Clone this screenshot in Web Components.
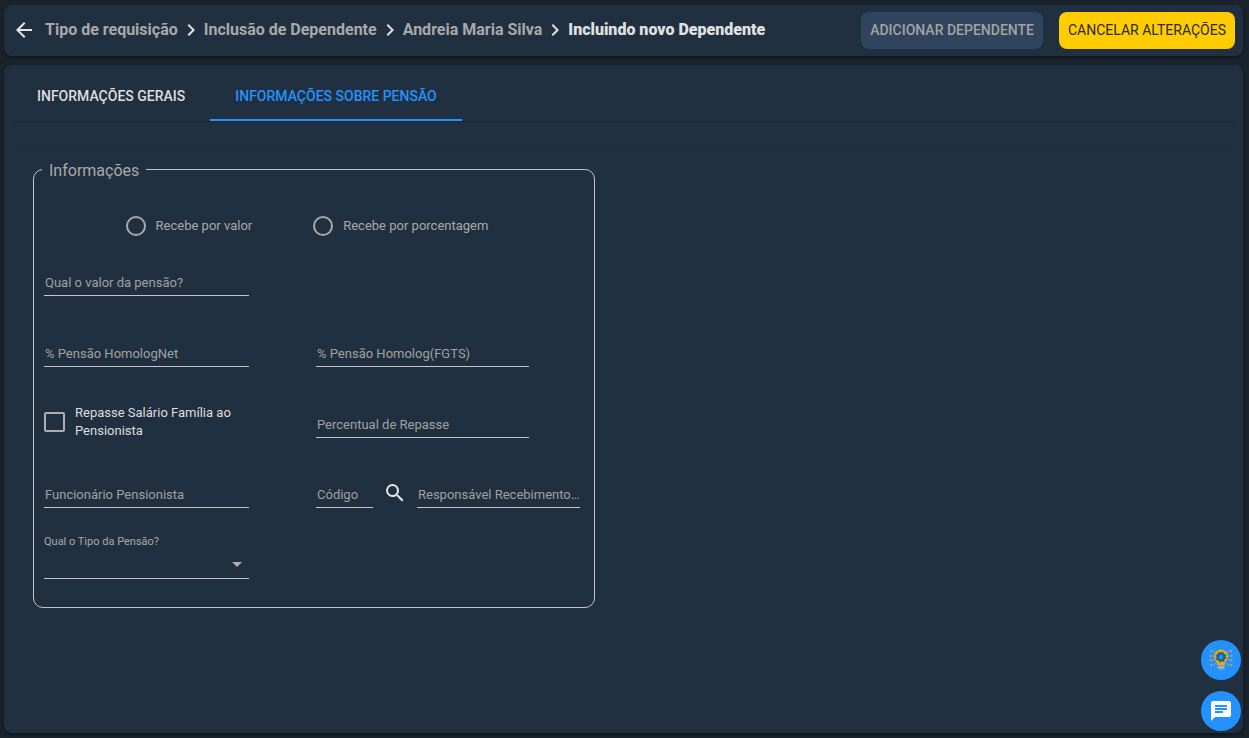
<!DOCTYPE html>
<html lang="pt-BR">
<head>
<meta charset="utf-8">
<meta name="viewport" content="width=device-width, initial-scale=1">
<title>Incluindo novo Dependente</title>
<style>
  html { background: #1a222b; }
  body { margin: 0; font: 400 14px/20px Roboto, "Liberation Sans", sans-serif; color: #e0e0e0; }
</style>
</head>
<body>
<dep-app></dep-app>
<script>
const define = (name, html, setup) => customElements.define(name, class extends HTMLElement {
  constructor() {
    super();
    const tpl = document.createElement('template');
    tpl.innerHTML = html;
    this.attachShadow({ mode: 'open' }).append(tpl.content.cloneNode(true));
  }
  connectedCallback() { if (setup) setup(this, this.shadowRoot); }
});

define('dep-crumbs', `
  <style>
    :host { display: block; }
    nav { display: flex; align-items: center; gap: 1px; padding-bottom: 2px; font: 700 16px/24px Roboto, sans-serif; white-space: nowrap; }
    a { color: #a9a9a9; text-decoration: none; }
    .back { display: flex; color: #e6e6e6; margin-right: 8px; }
    b { color: #e0e0e0; }
    svg { display: block; width: 24px; height: 24px; fill: currentColor; }
  </style>
  <nav aria-label="Navegação">
    <a class="back" href="#voltar" aria-label="Voltar"><svg viewBox="0 0 24 24"><path d="M20 11H7.83l5.59-5.59L12 4l-8 8 8 8 1.41-1.41L7.83 13H20z"/></svg></a>
    <a href="#tipo">Tipo de requisição</a>
    <svg viewBox="0 0 24 24"><path d="M10 6 8.59 7.41 13.17 12l-4.58 4.59L10 18l6-6z"/></svg>
    <a href="#inclusao">Inclusão de Dependente</a>
    <svg viewBox="0 0 24 24"><path d="M10 6 8.59 7.41 13.17 12l-4.58 4.59L10 18l6-6z"/></svg>
    <a href="#pessoa">Andreia Maria Silva</a>
    <svg viewBox="0 0 24 24"><path d="M10 6 8.59 7.41 13.17 12l-4.58 4.59L10 18l6-6z"/></svg>
    <b aria-current="page">Incluindo novo Dependente</b>
  </nav>`);

define('dep-button', `
  <style>
    :host { display: block; }
    button { display: block; height: 37px; padding: 0 9px 2px; border: 0; border-radius: 8px; background: #ffcc00; color: #2b2b2b;
      font: 400 14px/20px Roboto, sans-serif; text-transform: uppercase; white-space: nowrap; cursor: pointer; }
    button:disabled { background: #30455d; color: #a3a3a3; font-weight: 500; cursor: default; }
  </style>
  <button type="button"><slot></slot></button>`,
  (el, root) => { root.querySelector('button').disabled = el.hasAttribute('disabled'); });

define('dep-header', `
  <style>
    :host { display: flex; align-items: center; justify-content: space-between; gap: 16px; min-height: 51px; box-sizing: border-box;
      padding: 0 8px; border-radius: 8px; background: #213040; box-shadow: 0 2px 3px rgba(0,0,0,.35); }
    .actions { display: flex; gap: 16px; }
  </style>
  <dep-crumbs></dep-crumbs>
  <div class="actions">
    <dep-button disabled>Adicionar Dependente</dep-button>
    <dep-button>Cancelar Alterações</dep-button>
  </div>`);

define('dep-tabs', `
  <style>
    :host { display: block; border-bottom: 1px solid #1d2935; }
    div { display: flex; }
    button { height: 48px; padding: 0 25px; border: 0; border-bottom: 2px solid transparent; background: none; color: #dedede;
      font: 500 14px/20px Roboto, sans-serif; text-transform: uppercase; white-space: nowrap; cursor: pointer; }
    button[aria-selected=true] { color: #2492fc; border-color: #2492fc; }
  </style>
  <div role="tablist">
    <button role="tab" aria-selected="false">Informações Gerais</button>
    <button role="tab" aria-selected="true">Informações sobre Pensão</button>
  </div>`);

define('dep-radio', `
  <style>
    :host { display: block; }
    label { display: flex; align-items: center; gap: 10px; font: 400 13px/18px Roboto, sans-serif; color: #a9a9a9; white-space: nowrap; }
    input { appearance: none; box-sizing: border-box; width: 20px; height: 20px; margin: 0; border: 2px solid #a9a9a9; border-radius: 50%; }
    input:checked { background: radial-gradient(#2492fc 5px, transparent 6px); border-color: #2492fc; }
  </style>
  <label><input type="radio"><span><slot></slot></span></label>`);

define('dep-check', `
  <style>
    :host { display: block; }
    label { display: flex; align-items: center; gap: 10px; font: 400 13px/18px Roboto, sans-serif; color: #dedede; }
    input { appearance: none; flex: none; box-sizing: border-box; width: 21px; height: 20px; margin: 0; border: 2px solid #b0aeac; border-radius: 2px; }
    input:checked { background: #2492fc; border-color: #2492fc; }
  </style>
  <label><input type="checkbox"><span><slot></slot></span></label>`);

define('dep-field', `
  <style>
    :host { display: grid; align-items: end; box-sizing: border-box; height: 31px; min-width: 0; border-bottom: 1px solid #c8c6c2; }
    label, input { grid-area: 1 / 1; min-width: 0; font: 400 13px/18px Roboto, sans-serif; }
    label { padding: 0 0 3px 1px; color: #a0a0a0; pointer-events: none; overflow: hidden; text-overflow: ellipsis; white-space: nowrap; }
    input { width: 100%; box-sizing: border-box; height: 21px; padding: 0 0 3px; border: 0; background: none; color: #dedede; outline: 0; }
    input:focus + label, input:not(:placeholder-shown) + label { visibility: hidden; }
  </style>
  <input id="f" type="text" placeholder=" "><label for="f"><slot></slot></label>`);

define('dep-select', `
  <style>
    :host { display: block; border-bottom: 1px solid #c8c6c2; }
    label { display: block; padding-top: 1px; font: 400 11px/16px Roboto, sans-serif; color: #a9a9a9; }
    div { display: grid; align-items: center; }
    select, svg { grid-area: 1 / 1; }
    select { appearance: none; width: 100%; height: 28px; border: 0; background: none; color: #dedede; font: 400 13px/18px Roboto, sans-serif; outline: 0; }
    svg { justify-self: end; width: 10px; height: 5px; margin-right: 7px; fill: #b0b0b0; pointer-events: none; }
  </style>
  <label for="s"><slot></slot></label>
  <div><select id="s"><option></option></select><svg viewBox="0 0 10 5"><path d="M0 0h10L5 5z"/></svg></div>`);

define('dep-search', `
  <style>
    :host { display: block; }
    button { display: flex; padding: 0; border: 0; background: none; color: #e6e6e6; cursor: pointer; }
    svg { width: 24px; height: 24px; fill: currentColor; }
  </style>
  <button type="button" aria-label="Pesquisar"><svg viewBox="0 0 24 24"><path d="M15.5 14h-.79l-.28-.27A6.47 6.47 0 0 0 16 9.5 6.5 6.5 0 1 0 9.5 16c1.61 0 3.09-.59 4.23-1.57l.27.28v.79l5 4.99L20.49 19l-4.99-5zm-6 0C7.01 14 5 11.99 5 9.5S7.01 5 9.5 5 14 7.01 14 9.5 11.99 14 9.5 14z"/></svg></button>`);

define('dep-form', `
  <style>
    :host { display: block; }
    fieldset { box-sizing: border-box; max-width: 562px; min-width: 0; margin: 0; padding: 28px 14px 28px 10px; border: 1px solid #c4c6c8; border-radius: 10px; }
    legend { margin-left: -2px; padding: 4px 7px 0; font-size: 16px; line-height: 16px; color: #a9a9a9; }
    .radios { display: flex; justify-content: center; align-items: center; gap: 61px; min-height: 38px; padding-right: 10px; }
    .grid { display: grid; grid-template-columns: 1fr 1fr; column-gap: 8px; grid-template-rows: 71px 71px 70px 71px 51px; align-items: center; }
    .left { grid-column: 1; width: 205px; }
    .right { width: 213px; }
    .lookup { display: flex; align-items: center; }
    .code { width: 57px; }
    .name { flex: 1; }
    dep-search { margin: 0 10px; }
    dep-select { align-self: end; }
  </style>
  <fieldset>
    <legend>Informações</legend>
    <div class="radios"><dep-radio>Recebe por valor</dep-radio><dep-radio>Recebe por porcentagem</dep-radio></div>
    <div class="grid">
      <dep-field class="left">Qual o valor da pensão?</dep-field>
      <dep-field class="left">% Pensão HomologNet</dep-field>
      <dep-field class="right">% Pensão Homolog(FGTS)</dep-field>
      <dep-check class="left">Repasse Salário Família ao Pensionista</dep-check>
      <dep-field class="right">Percentual de Repasse</dep-field>
      <dep-field class="left">Funcionário Pensionista</dep-field>
      <div class="lookup"><dep-field class="code">Código</dep-field><dep-search></dep-search><dep-field class="name">Responsável Recebimento Pensão</dep-field></div>
      <dep-select class="left">Qual o Tipo da Pensão?</dep-select>
    </div>
  </fieldset>`);

define('dep-fabs', `
  <style>
    :host { position: fixed; right: 8px; bottom: 7px; display: grid; gap: 11px; }
    button { display: grid; place-items: center; width: 40px; height: 40px; padding: 0; border: 0; border-radius: 50%; background: #2492fc; cursor: pointer; }
    svg { display: block; width: 24px; height: 24px; }
  </style>
  <button type="button" aria-label="Dicas">
    <svg viewBox="0 0 24 24">
      <g fill="none" stroke="#8f9f86" stroke-width="1">
        <path d="M2 3h3l2 2M1.500 8H5M1.500 12H5M2 17h3l2-2M22 3h-3l-2 2M22.500 8H19M22.500 12H19M22 17h-3l-2-2"/>
      </g>
      <g fill="#c4a35a"><circle cx="2" cy="3" r="1"/><circle cx="1.500" cy="8" r="1"/><circle cx="1.500" cy="12" r="1"/><circle cx="2" cy="17" r="1"/><circle cx="22" cy="3" r="1"/><circle cx="22.500" cy="8" r="1"/><circle cx="22.500" cy="12" r="1"/><circle cx="22" cy="17" r="1"/></g>
      <path fill="#f9a61a" d="M12 1.500a7 7 0 0 0-7 7c0 3.500 3 5 3.500 9h7c.5-4 3.500-5.500 3.500-9a7 7 0 0 0-7-7z"/>
      <circle cx="12" cy="9" r="3.400" fill="#2492fc" stroke="#17658f" stroke-width="2.400"/>
      <circle cx="12" cy="9" r="4.900" fill="none" stroke="#17658f" stroke-width="1.200" stroke-dasharray="1.900 1.950"/>
      <path fill="#b9c3c9" d="M8.500 18.500h7v2h-7z"/><path fill="#7c98ac" d="M9.500 20.500h5l-1 2h-3z"/>
    </svg>
  </button>
  <button type="button" aria-label="Mensagens">
    <svg viewBox="0 0 24 24"><path fill="#fff" d="M20 2H4c-1.100 0-1.990.9-1.990 2L2 22l4-4h14c1.100 0 2-.9 2-2V4c0-1.100-.9-2-2-2zM6 9h12v2H6V9zm8 5H6v-2h8v2zm4-6H6V6h12v2z"/></svg>
  </button>`);

define('dep-app', `
  <style>
    :host { display: flex; flex-direction: column; gap: 9px; box-sizing: border-box; min-height: 100vh; padding: 5px 6px 5px 4px; }
    main { flex: 1; padding: 8px; border-radius: 8px; background: #213040; box-shadow: 0 2px 3px rgba(0,0,0,.35); }
    .content { margin-top: 24px; padding: 12px 21px; border-top: 1px solid #1f2c3a; }
  </style>
  <dep-header></dep-header>
  <main>
    <dep-tabs></dep-tabs>
    <div class="content"><dep-form></dep-form></div>
  </main>
  <dep-fabs></dep-fabs>`);
</script>
</body>
</html>
